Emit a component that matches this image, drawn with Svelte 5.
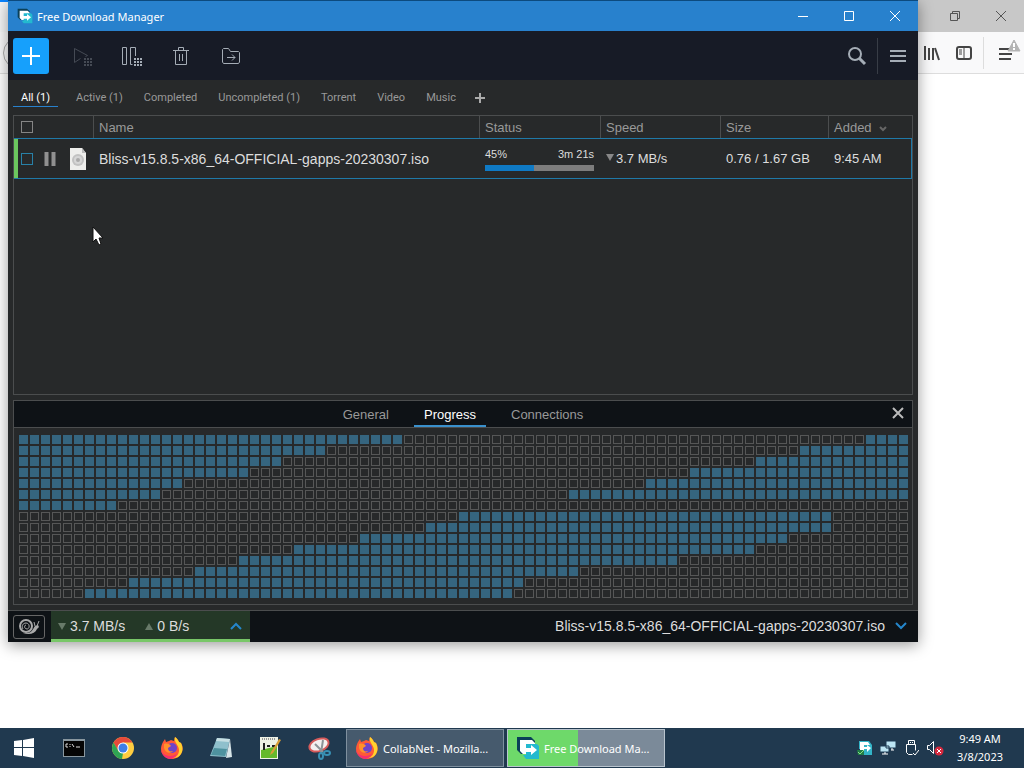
<script lang="ts">
    const filters = ["All (1)", "Active (1)", "Completed", "Uncompleted (1)", "Torrent", "Video", "Music"];
    const panels = ["General", "Progress", "Connections"];

    let filter = $state("All (1)");
    let panel = $state("Progress");

    const fileName = "Bliss-v15.8.5-x86_64-OFFICIAL-gapps-20230307.iso";
    const percent = 45;
    const cols = 81;

    // downloaded pieces per row, as [from, to) column ranges
    const rows = [
        [[0, 35], [77, 81]],
        [[0, 28], [71, 81]],
        [[0, 24], [67, 81]],
        [[0, 21], [61, 81]],
        [[0, 15], [57, 81]],
        [[0, 13], [50, 81]],
        [[0, 9]],
        [[40, 74]],
        [[37, 74]],
        [[31, 70]],
        [[25, 67]],
        [[20, 60]],
        [[16, 51]],
        [[10, 46]],
        [[6, 45]],
    ];

    const pieces = rows.flatMap((ranges) =>
        Array.from({ length: cols }, (_, c) => ranges.some(([from, to]) => c >= from && c < to)),
    );
</script>

{#snippet firefox(size: number)}
    <svg width={size} height={size} viewBox="0 0 24 24" aria-hidden="true">
        <path d="M3 6l2-3 1 3 3-1 2-1c1 0 2 1 3 1l1-4c2 1 3 3 4 5l2 1c2 3 2 6 1 9-2 5-6 7-10 7C6 23 1 19 1 13c0-3 1-5 2-7z" fill="#ff5a36" />
        <path d="M15 1c2 1 3 3 4 5l2 1c2 4 2 8 0 11-2 3-5 4-8 4 4-1 6-4 6-8 0-3-2-5-3-7-1-2-2-4-1-6z" fill="#ffd22e" />
        <path d="M1 13c1 5 5 7 9 7 3 0 6-1 7-3-1 4-5 6-8 6-4-1-8-5-8-10z" fill="#f5306f" />
        <circle cx="12" cy="12" r="5" fill="#7044c8" />
        <path d="M4 8c3-1 6 0 7 2l-3 2c0 3 2 4 5 3-2 3-8 2-9-3z" fill="#ff922b" />
    </svg>
{/snippet}

{#snippet logo(size: number)}
    <svg width={size} height={size} viewBox="0 0 24 24" aria-hidden="true">
        <path d="M1 1h14l4 4v5H7v8H5l-4-4z" fill="#0a4058" />
        <path d="M4 4h12l3 3v4h-8v7H7l-3-3z" fill="#fff" />
        <path d="M10 8h11l2 2v13H10l-3-4h3z" fill="#23b9cf" />
        <path d="M8 12h7V9l6 5-6 5v-3H8z" fill="#fff" />
    </svg>
{/snippet}

<div class="desktop">
    <div class="browser">
        <div class="browser-title">
            <span class="browser-tab"></span>
            <span class="spacer"></span>
            <button aria-label="Restore browser">
                <svg width="12" height="12" viewBox="0 0 12 12"><path d="M1.5 3.5h7v7h-7zM3.5 3.5v-2h7v7h-2" /></svg>
            </button>
            <button aria-label="Close browser">
                <svg width="12" height="12" viewBox="0 0 12 12"><path d="M1 1l10 10M11 1L1 11" /></svg>
            </button>
        </div>
        <div class="browser-bar">
            <button class="back" aria-label="Back"></button>
            <span class="spacer"></span>
            <button aria-label="Library">
                <svg width="16" height="16" viewBox="0 0 16 16"><path d="M1 1v14M5 3v12M9 3v12M11 3l4 12" stroke-width="2" /></svg>
            </button>
            <button aria-label="Sidebars">
                <svg width="16" height="16" viewBox="0 0 16 16"><rect x="1" y="2" width="14" height="12" rx="2" stroke-width="2" /><path d="M8 2v12M3 5h3M3 7h3M3 9h3" /></svg>
            </button>
            <button class="browser-menu" aria-label="Browser menu">
                <svg width="24" height="28" viewBox="0 0 24 28"><path d="M1 10h13M1 15h13M1 20h12" stroke-width="2" /><path d="M16 1l6 11H10z" fill="#b4b4b4" stroke="#b4b4b4" /><path d="M16 4v4M16 9v2" stroke="#fff" stroke-width="2" /></svg>
            </button>
        </div>
    </div>

    <main class="window">
        <header class="titlebar">
            {@render logo(16)}
            <span class="title">Free Download Manager</span>
            <button aria-label="Minimize"><svg width="12" height="12" viewBox="0 0 12 12"><path d="M1 6.5h10" /></svg></button>
            <button aria-label="Maximize"><svg width="12" height="12" viewBox="0 0 12 12"><path d="M1.5 1.5h9v9h-9z" /></svg></button>
            <button aria-label="Close"><svg width="12" height="12" viewBox="0 0 12 12"><path d="M1 1l10 10M11 1L1 11" /></svg></button>
        </header>

        <div class="toolbar">
            <button class="add" aria-label="Add download">
                <svg width="20" height="20" viewBox="0 0 20 20"><path d="M10 1v18M1 10h18" stroke-width="2" /></svg>
            </button>
            <button class="dim" aria-label="Start all">
                <svg width="22" height="24" viewBox="0 0 22 24"><path d="M4.5 4.5v14l6-4M4.5 4.5l13 7-2 1" /><path d="M14 15h8M14 18h8M14 21h8" stroke-width="2" stroke-dasharray="2 1" /></svg>
            </button>
            <button aria-label="Pause all">
                <svg width="22" height="24" viewBox="0 0 22 24"><path d="M2.5 3.5h4v17h-4zM15.5 12V3.5h-5v17h2" /><path d="M14 15h8M14 18h8M14 21h8" stroke-width="2" stroke-dasharray="2 1" /></svg>
            </button>
            <button aria-label="Delete">
                <svg width="22" height="24" viewBox="0 0 22 24"><path d="M3 6.5h16M5.5 6v14.500h11V6M8.500 6V3.500h5v3M9.500 10v7M12.500 10v7" /></svg>
            </button>
            <button aria-label="Move to folder">
                <svg width="22" height="24" viewBox="0 0 22 24"><path d="M2.5 18V5.5l1-1h5l2 3h8l1 1V18l-1 1.5h-15zM7 13.5h8M12 10.500l3 3-3 3" /></svg>
            </button>
            <span class="spacer"></span>
            <button class="search" aria-label="Search">
                <svg width="20" height="20" viewBox="0 0 20 20"><circle cx="8" cy="8" r="6" stroke-width="2" /><path d="M12 12l6 6" stroke-width="3" /></svg>
            </button>
            <button class="menu" aria-label="Menu">
                <svg width="16" height="16" viewBox="0 0 16 16"><path d="M0 3h16M0 8h16M0 13h16" stroke-width="2" /></svg>
            </button>
        </div>

        <nav class="filters" aria-label="Filters">
            {#each filters as name}
                <button class:active={filter === name} onclick={() => (filter = name)}>{name}</button>
            {/each}
            <button class="add-filter" aria-label="Add filter">
                <svg width="12" height="12" viewBox="0 0 12 12"><path d="M6 1v10M1 6h10" stroke-width="2" /></svg>
            </button>
        </nav>

        <section class="list">
            <table>
                <thead>
                    <tr>
                        <th class="col-check"><input type="checkbox" aria-label="Select all" /></th>
                        <th>Name</th>
                        <th class="col-status">Status</th>
                        <th class="col-speed">Speed</th>
                        <th class="col-size">Size</th>
                        <th class="col-added">Added <svg width="8" height="6" viewBox="0 0 8 6"><path d="M1 1l3 3 3-3" stroke-width="2" /></svg></th>
                    </tr>
                </thead>
                <tbody>
                    <tr>
                        <td class="controls">
                            <div>
                                <input type="checkbox" aria-label="Select {fileName}" />
                                <button aria-label="Pause"><svg width="12" height="16" viewBox="0 0 12 16"><path d="M2.5 1v14M9.5 1v14" stroke-width="4" /></svg></button>
                                <svg class="file" width="18" height="22" viewBox="0 0 18 22" aria-hidden="true">
                                    <path d="M1 0h12l4 5v17H1z" fill="#eeeeec" />
                                    <path d="M13 0v5h4z" fill="#bbb" />
                                    <circle cx="9" cy="12" r="6" fill="#c2c2c2" />
                                    <circle cx="9" cy="12" r="4" fill="#d6d6d6" />
                                    <circle cx="9" cy="12" r="2" fill="#aaa" />
                                </svg>
                            </div>
                        </td>
                        <td class="name">{fileName}</td>
                        <td>
                            <div class="status-text"><span>{percent}%</span><span>3m 21s</span></div>
                            <div class="bar"><div class="bar-fill" style="width: {percent}%"></div></div>
                        </td>
                        <td class="speed"><i class="down"></i>3.7 MB/s</td>
                        <td>0.76 / 1.67 GB</td>
                        <td>9:45 AM</td>
                    </tr>
                </tbody>
            </table>
        </section>

        <section class="details">
            <div class="detail-tabs">
                {#each panels as name}
                    <button class:active={panel === name} onclick={() => (panel = name)}>{name}</button>
                {/each}
                <button class="detail-close" aria-label="Close panel">
                    <svg width="12" height="12" viewBox="0 0 12 12"><path d="M1 1l10 10M11 1L1 11" stroke-width="2" /></svg>
                </button>
            </div>
            <div class="pieces">
                {#each pieces as done}
                    <i class:done></i>
                {/each}
            </div>
        </section>

        <footer class="statusbar">
            <button class="snail" aria-label="Snail mode">
                <svg width="22" height="18" viewBox="0 0 22 18">
                    <path d="M1 15h4c6 2 12 1 14-4l2-2-1-2-3 1c-2 3-3 6-7 7z" fill="#aaa" stroke="none" />
                    <path d="M17 8l-1-4M19 8l2-5" />
                    <circle cx="8" cy="8" r="6" stroke-width="2" fill="#0e1216" />
                    <path d="M5 11c-2-3 0-6 3-6 4 0 4 6 1 6-3 0-3-4-1-4" stroke-width="1" />
                </svg>
            </button>
            <button class="speeds">
                <i class="down"></i><span class="rate">3.7 MB/s</span>
                <i class="up"></i><span>0 B/s</span>
                <svg width="12" height="8" viewBox="0 0 12 8"><path d="M1 7l5-5 5 5" stroke-width="2" /></svg>
            </button>
            <span class="spacer"></span>
            <button class="current">
                {fileName}
                <svg width="12" height="8" viewBox="0 0 12 8"><path d="M1 1l5 5 5-5" stroke-width="2" /></svg>
            </button>
        </footer>
    </main>

    <svg class="cursor" width="12" height="20" viewBox="0 0 12 20" aria-hidden="true">
        <path d="M1 1v15l3-3 3 6 2-1-2-6h4z" fill="#fff" stroke="#111" />
    </svg>

    <nav class="taskbar" aria-label="Taskbar">
        <button class="launch" aria-label="Start">
            <svg width="22" height="22" viewBox="0 0 22 22"><path d="M0 4l8-1v7H0zM9 3l11-2v9H9zM0 11h8v8l-8-1zM9 11h11v10L9 19z" fill="#fff" /></svg>
        </button>
        <button class="launch" aria-label="Command Prompt">
            <svg width="22" height="20" viewBox="0 0 22 20"><path d="M0 1h22v18H0z" fill="#89979f" /><path d="M1 3h20v15H1z" fill="#050505" /><path d="M3 6h2M3 6v3h2M7 6v1M7 8v1M9 6l2 3M13 9h4" stroke="#ddd" /></svg>
        </button>
        <button class="launch" aria-label="Chrome">
            <svg width="24" height="24" viewBox="0 0 24 24">
                <circle cx="12" cy="12" r="11" fill="#ffcd40" />
                <path d="M2.5 6.5A11 11 0 0 1 21.5 6.5H12L7 15z" fill="#e64a3b" />
                <path d="M2.5 6.5L8 16l4 1-1 6A11 11 0 0 1 2.5 6.5z" fill="#2fa454" />
                <circle cx="12" cy="12" r="5.5" fill="#fff" />
                <circle cx="12" cy="12" r="4.5" fill="#3f7fe8" />
            </svg>
        </button>
        <button class="launch" aria-label="Firefox">{@render firefox(24)}</button>
        <button class="launch" aria-label="Notepad">
            <svg width="24" height="24" viewBox="0 0 24 24"><path d="M8 2l13 1-4 18L1 20z" fill="#8fc0cc" /><path d="M8 2l13 1-1 3L7 5z" fill="#c6dfe3" /><path d="M21 3l2 18-6 1z" fill="#d7e5e8" /><path d="M5 12l13 1-2 7-14-1z" fill="#4e929f" /></svg>
        </button>
        <button class="launch" aria-label="Notepad++">
            <svg width="24" height="24" viewBox="0 0 24 24"><path d="M2 1h18v22H2z" fill="#eef2e6" /><path d="M3 14l16-4v12H3z" fill="#65b92c" /><path d="M4 3h14" stroke="#999" stroke-width="2" stroke-dasharray="1 1" /><path d="M6 7v7M9 10h3M14 10h3" stroke="#222" stroke-width="2" /><path d="M13 16l8-13 2 1-8 13-3 2z" fill="#d99f37" /></svg>
        </button>
        <button class="launch" aria-label="Snipping Tool">
            <svg width="24" height="24" viewBox="0 0 24 24"><ellipse cx="12" cy="9" rx="10" ry="6" transform="rotate(-20 12 9)" fill="#f4f0f0" stroke="#d75b5b" stroke-width="2" /><path d="M8 8l8 8M16 4l-2 13" stroke="#8d9398" stroke-width="2" /><g fill="none" stroke="#3890b4" stroke-width="2"><ellipse cx="14" cy="20" rx="2" ry="3" /><ellipse cx="20" cy="17" rx="3" ry="2" /></g></svg>
        </button>
        <button class="task">{@render firefox(24)}<span>CollabNet - Mozilla...</span></button>
        <button class="task downloading" style="--done: {percent}%">{@render logo(24)}<span>Free Download Ma...</span></button>
        <span class="spacer"></span>
        <div class="tray">
            <svg width="16" height="16" viewBox="0 0 16 16"><path d="M2 1h10l3 4v10H5V9H2z" fill="#33b4c8" /><path d="M3 2h8l2 3H7v5H3z" fill="#fff" /><path d="M6 7h4V5l4 3-4 4V9H6z" fill="#fff" /><path d="M0 10h7v5H1z" fill="#207b46" /><path d="M1 12l2 2 4-4" fill="none" stroke="#8fe28b" /></svg>
            <svg width="16" height="16" viewBox="0 0 16 16"><path d="M6 1h10v7H6zM0 6h9v6H0z" fill="#bce5f4" stroke="#1d3a55" /><path d="M2 14h6M5 12v2M11 10h3M12 8v2" stroke="#fff" /></svg>
            <svg width="16" height="18" viewBox="0 0 16 18" fill="none" stroke="#fff"><path d="M5.5 1.5h6v4h-6zM3.5 5.5h9v6M3.5 5.500v8l2 2h4M10 14l2 2 4-5M7 3.500h1M9 3.500h1" /></svg>
            <svg width="18" height="16" viewBox="0 0 18 16"><path d="M1.5 5.5h2l4-4v12l-4-4h-2z" fill="none" stroke="#fff" /><circle cx="13" cy="11" r="4.5" fill="#d6293e" /><path d="M11 9l4 4M15 9l-4 4" stroke="#fff" /></svg>
        </div>
        <div class="clock"><span>9:49 AM</span><span>3/8/2023</span></div>
    </nav>
</div>

<style>
    :global(body) {
        margin: 0;
        background: #fff;
    }

    .desktop {
        position: relative;
        display: flex;
        flex-direction: column;
        min-height: 100vh;
        overflow: hidden;
        background: #fff;
        font-family: "Liberation Sans", Arial, sans-serif;
        font-size: 14px;
    }

    button {
        display: flex;
        align-items: center;
        justify-content: center;
        margin: 0;
        padding: 0;
        border: 0;
        background: none;
        color: inherit;
        font: inherit;
    }

    button svg,
    th svg {
        display: block;
        flex: none;
    }

    .spacer {
        flex: 1;
    }

    .browser {
        flex: 1;
    }

    .browser-title,
    .browser-bar {
        display: flex;
        align-items: center;
        box-sizing: border-box;
    }

    .browser-title {
        height: 32px;
        background: #c8c8c8;
    }

    .browser-title button {
        width: 46px;
        height: 32px;
    }

    .browser-title svg {
        fill: none;
        stroke: #555;
    }

    .browser-tab {
        box-sizing: border-box;
        width: 240px;
        height: 32px;
        border-top: 2px solid #0a84ff;
        background: #f5f6f7;
    }

    .browser-bar {
        height: 42px;
        border-bottom: 1px solid #ddd;
        background: #f9f9fa;
    }

    .browser-bar button {
        width: 32px;
        height: 32px;
    }

    .browser-bar .back {
        box-sizing: border-box;
        margin-left: 3px;
        border: 1px solid #aaa;
        border-radius: 50%;
    }

    .browser-bar svg {
        fill: none;
        stroke: #444;
    }

    .browser-bar .browser-menu {
        box-sizing: border-box;
        justify-content: flex-start;
        width: 41px;
        margin-left: 3px;
        padding-left: 14px;
        border-left: 1px solid #ddd;
    }

    .window {
        position: absolute;
        top: 0;
        left: 8px;
        right: 106px;
        background: #27292a;
        color: #ddd;
        box-shadow: 0 3px 14px rgba(0, 0, 0, 0.4);
    }

    .titlebar {
        display: flex;
        align-items: center;
        box-sizing: border-box;
        height: 31px;
        padding-left: 9px;
        border-top: 1px solid #0c4a7e;
        background: #2881cd;
        color: #fff;
        font-family: "Noto Sans", "Segoe UI", sans-serif;
        font-size: 11px;
    }

    .title {
        flex: 1;
        padding-left: 4px;
    }

    .titlebar button {
        width: 46px;
        height: 30px;
    }

    .titlebar button svg {
        fill: none;
        stroke: #fff;
    }

    .toolbar {
        display: flex;
        align-items: center;
        height: 49px;
        padding-left: 5px;
        background: #171b26;
    }

    .toolbar button {
        width: 36px;
        height: 36px;
        margin-right: 14px;
    }

    .toolbar svg {
        fill: none;
        stroke: #a5adb6;
    }

    .toolbar .add {
        border-radius: 3px;
        background: #16a0fc;
    }

    .toolbar .add svg {
        stroke: #fff;
    }

    .toolbar .dim svg {
        stroke: #454a54;
    }

    .toolbar .search {
        margin-right: 2px;
    }

    .toolbar .menu {
        width: 41px;
        margin: 0;
        border-left: 1px solid #383d46;
    }

    .filters {
        display: flex;
        align-items: center;
        gap: 15px;
        box-sizing: border-box;
        height: 35px;
        padding: 1px 0 0 5px;
        color: #999;
        font-family: Roboto, Tahoma, sans-serif;
        font-size: 11px;
    }

    .filters button {
        height: 18px;
        padding: 0 3px;
        border-bottom: 1px solid transparent;
    }

    .filters .active {
        padding: 0 8px;
        border-color: #2881cd;
        color: #fff;
    }

    .filters svg {
        fill: none;
        stroke: #aaa;
    }

    .filters .add-filter {
        padding: 0;
    }

    .list {
        height: 279px;
        margin: 0 5px 5px;
        border: 1px solid #4b4d4e;
        border-top: 0;
    }

    table {
        width: 100%;
        border-collapse: separate;
        border-spacing: 0;
        table-layout: fixed;
    }

    th {
        box-sizing: border-box;
        height: 23px;
        padding: 0 5px;
        border: 1px solid #4b4d4e;
        border-width: 1px 0 0 1px;
        color: #999;
        font-size: 13px;
        font-weight: 400;
        text-align: left;
    }

    th:first-child {
        border-left: 0;
    }

    th svg {
        display: inline-block;
        margin-left: 4px;
        fill: none;
        stroke: #666;
    }

    .col-check {
        width: 79px;
        padding-left: 7px;
    }

    .col-status {
        width: 121px;
    }

    .col-speed {
        width: 120px;
    }

    .col-size {
        width: 108px;
    }

    .col-added {
        width: 84px;
    }

    input[type="checkbox"] {
        display: block;
        appearance: none;
        box-sizing: border-box;
        width: 12px;
        height: 12px;
        margin: 0;
        border: 1px solid #858585;
    }

    td input[type="checkbox"] {
        border-color: #2881a8;
    }

    td {
        box-sizing: border-box;
        height: 41px;
        padding: 0 6px;
        border: 1px solid #1f79a8;
        border-width: 1px 0;
        font-size: 13px;
        white-space: nowrap;
    }

    td:last-child {
        border-right-width: 1px;
    }

    td.controls {
        padding: 0;
    }

    td.name {
        font-size: 14px;
    }

    .controls div {
        display: flex;
        align-items: center;
        height: 39px;
        padding-left: 3px;
        border-left: 4px solid #6cc75e;
    }

    .controls button {
        margin: 0 13px 0 11px;
    }

    .controls button svg {
        stroke: #909090;
    }

    .status-text {
        display: flex;
        justify-content: space-between;
        font-size: 11px;
        line-height: 14px;
    }

    .bar {
        height: 6px;
        margin-top: 4px;
        background: #7d7d7d;
    }

    .bar-fill {
        height: 100%;
        background: #0f7ac5;
    }

    .down,
    .up {
        display: inline-block;
        border: 4px solid transparent;
    }

    .down {
        border-top: 7px solid #888;
        border-bottom: 0;
    }

    .up {
        border-bottom: 7px solid #888;
        border-top: 0;
    }

    .speed .down {
        margin: 0 2px 2px 0;
    }

    .details {
        margin: 0 5px 5px;
        border: 1px solid #4b4d4e;
    }

    .detail-tabs {
        position: relative;
        display: flex;
        justify-content: center;
        gap: 15px;
        height: 26px;
        border-bottom: 1px solid #4b4d4e;
        background: #0e1216;
        color: #999;
        font-size: 13px;
    }

    .detail-tabs button {
        box-sizing: border-box;
        padding: 3px 10px 0;
        border-bottom: 2px solid transparent;
    }

    .detail-tabs .active {
        border-color: #3a90cc;
        color: #fff;
    }

    .detail-tabs .detail-close {
        position: absolute;
        right: 8px;
        top: 0;
        height: 26px;
        padding: 0;
    }

    .detail-close svg {
        stroke: #bbb;
    }

    .pieces {
        display: grid;
        grid-template-columns: repeat(auto-fill, 9px);
        gap: 2px;
        padding: 7px 3px 6px 5px;
    }

    .pieces i {
        box-sizing: border-box;
        height: 9px;
        border: 1px solid #565757;
    }

    .pieces .done {
        border-color: #35657f;
        background: #35657f;
    }

    .statusbar {
        display: flex;
        align-items: center;
        height: 31px;
        padding-left: 5px;
        border-top: 1px solid #4b4d4e;
        background: #0e1216;
    }

    .statusbar svg {
        fill: none;
        stroke: #2586cb;
    }

    .snail {
        box-sizing: border-box;
        width: 32px;
        height: 24px;
        border: 1px solid #666;
        border-radius: 3px;
    }

    .statusbar .snail svg {
        stroke: #aaa;
    }

    .speeds {
        box-sizing: border-box;
        justify-content: flex-start;
        gap: 4px;
        width: 199px;
        height: 31px;
        margin-left: 6px;
        padding: 2px 8px 0 7px;
        border-bottom: 3px solid #78c768;
        background: #243827;
    }

    .speeds .rate {
        margin-right: 16px;
    }

    .speeds .down {
        border-top-color: #687a69;
    }

    .speeds .up {
        border-bottom-color: #687a69;
    }

    .speeds svg {
        margin-left: auto;
    }

    .current {
        gap: 10px;
        padding: 0 11px 2px 0;
    }

    .cursor {
        position: absolute;
        top: 226px;
        left: 92px;
    }

    .taskbar {
        display: flex;
        align-items: center;
        height: 40px;
        background: #20394f;
        color: #fff;
        font-family: "Noto Sans", "Segoe UI", sans-serif;
        font-size: 11px;
    }

    .launch {
        width: 49px;
        height: 40px;
    }

    .task {
        box-sizing: border-box;
        justify-content: flex-start;
        gap: 4px;
        width: 158px;
        height: 38px;
        margin-left: 3px;
        padding-left: 8px;
        border: 1px solid #7f909f;
        background: #465a6d;
        white-space: nowrap;
    }

    .downloading {
        border-color: #b9c4ce;
        background: linear-gradient(90deg, #6ed96a var(--done), #7b8a99 var(--done));
    }

    .tray {
        display: flex;
        align-items: center;
        gap: 7px;
    }

    .clock {
        display: flex;
        flex-direction: column;
        align-items: center;
        width: 72px;
        margin-right: 8px;
        line-height: 18px;
    }
</style>
